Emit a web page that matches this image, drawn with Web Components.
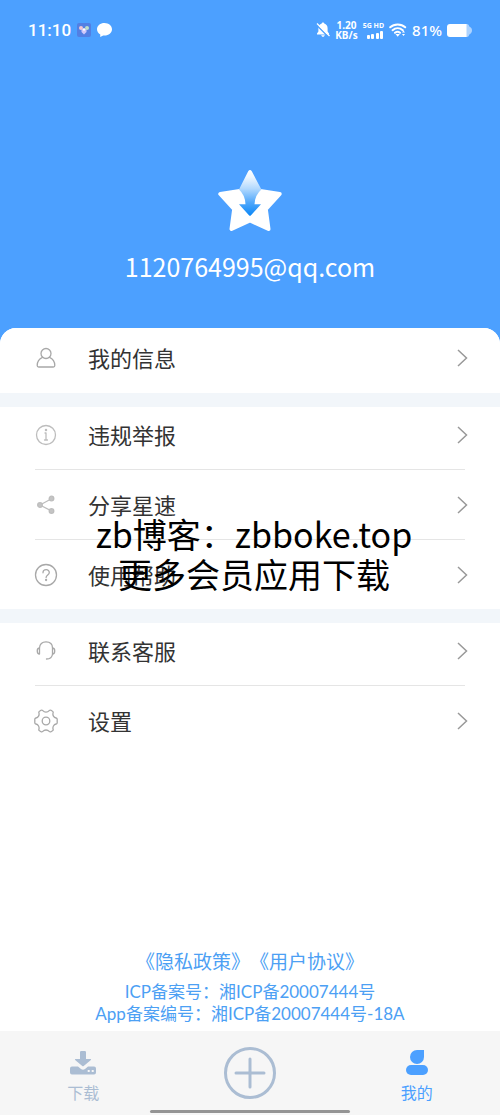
<!DOCTYPE html>
<html lang="zh-CN">
<head>
<meta charset="utf-8">
<meta name="viewport" content="width=device-width, initial-scale=1">
<title>我的</title>
<style>
  body { margin: 0; background: #fff; font-family: "Noto Sans CJK SC", sans-serif; }
</style>
</head>
<body>
<profile-page></profile-page>
<script>
const define = (name, html) => {
  const template = document.createElement('template');
  template.innerHTML = html;
  customElements.define(name, class extends HTMLElement {
    constructor() {
      super();
      this.attachShadow({ mode: 'open' }).append(template.content.cloneNode(true));
    }
  });
};

define('status-bar', `
<style>
  :host { display: flex; align-items: center; justify-content: space-between; height: 60px; padding: 0 28px; color: #fff; font-weight: 500; }
  div { display: flex; align-items: center; }
  .left { gap: 6px; }
  .right { gap: 5px; }
  svg { display: block; }
  time { font: 500 17px/24px Roboto, sans-serif; }
  .speed { display: grid; font: 700 10px/10px "Noto Sans", sans-serif; text-align: center; }
  .cell { display: grid; gap: 1px; justify-items: end; font: 700 7px/8px "Noto Sans", sans-serif; }
  .percent { font: 500 15px/24px "Noto Sans", sans-serif; }
</style>
<div class="left">
  <time>11:10</time>
  <svg width="14" height="14" viewBox="0 0 14 14"><rect width="14" height="14" rx="2" fill="#527fe3"/><circle cx="4" cy="5" r="2" fill="#f3c6d3"/><circle cx="10" cy="5" r="2" fill="#bfe0c8"/><path d="M4.500 6.500L7 5.500l2.500 1v2.500L7 11.500 4.500 9z" fill="#cfc8fa"/><circle cx="7" cy="6.500" r="1.200" fill="#fff"/></svg>
  <svg width="15" height="14" viewBox="0 0 15 14"><path fill="#fff" d="M7.500 0C3.300 0 0 2.700 0 6.200c0 2.200 1.300 4.100 3.300 5.300L3.200 14l3-1.500c.4.1.9.100 1.300.100 4.200 0 7.500-2.800 7.500-6.300S11.700 0 7.500 0z"/></svg>
</div>
<div class="right">
  <svg width="14" height="16" viewBox="0 0 14 16"><path fill="#fff" d="M7 .5c.7 0 1.200.5 1.300 1.100 2 .6 3.300 2.300 3.300 4.600v3.300l1.400 2v1H1v-1l1.400-2V6.200c0-2.300 1.300-4 3.300-4.600C5.800 1 6.300.5 7 .5zM5.200 13.300h3.600c-.2.900-.9 1.500-1.800 1.500s-1.600-.6-1.800-1.500z"/><path d="M.3 2.700l12 12" stroke="#4ca0ff" stroke-width="1.500"/><path d="M1 1.500l12.500 12.500" stroke="#fff" stroke-width="1.200"/></svg>
  <span class="speed"><span>1.20</span><span>KB/s</span></span>
  <span class="cell"><span>5G HD</span><svg width="17" height="8" viewBox="0 0 17 8" fill="#fff"><rect y="4" width="3" height="4" rx="1"/><rect x="4" y="3" width="3" height="5" rx="1"/><rect x="9" y="2" width="3" height="6" rx="1"/><rect x="13" width="3" height="8" rx="1"/></svg></span>
  <svg width="18" height="14" viewBox="0 0 18 14"><g fill="none" stroke="#fff" stroke-width="2" stroke-linecap="round"><path d="M1.200 4.300c4-3.700 11-3.700 15 0M3.600 7.200c3-2.600 7.200-2.600 10.200 0M6 9.800c1.600-1.200 3.500-1.200 5 0"/></g><path fill="#fff" d="M6.500 11h4.400l-2.200 2.700zM13 9.600l1.500-2 1.500 2zM13 11h3l-1.500 2z"/></svg>
  <span class="percent">81%</span>
  <svg width="25" height="13" viewBox="0 0 25 13"><path fill="#add3ff" d="M3 0h16a3 3 0 0 1 3.300 2.600C24 3.500 25 4.500 25 6.500s-1 3-2.700 3.900A3 3 0 0 1 19 13H3z"/><path fill="#fff" d="M3 0h16.500v13H3a3 3 0 0 1-3-3V3a3 3 0 0 1 3-3z"/></svg>
</div>`);

define('profile-header', `
<style>
  :host { display: flex; flex-direction: column; align-items: center; height: 348px; background: #4ca0ff; color: #fff; }
  status-bar { align-self: stretch; }
  svg { margin-top: 109px; }
  p { margin: 15px 0 0; font-size: 25px; line-height: 36px; }
</style>
<status-bar></status-bar>
<svg width="66" height="64" viewBox="0 0 66 64" role="img" aria-label="星速">
  <defs><linearGradient id="g" x1="0" y1="0" x2="0" y2="1"><stop offset="0" stop-color="#fff"/><stop offset=".15" stop-color="#eef7ff"/><stop offset=".4" stop-color="#b4dafe"/><stop offset=".7" stop-color="#52a9fb"/><stop offset="1" stop-color="#0b87f7"/></linearGradient></defs>
  <path fill="#fff" stroke="#fff" stroke-width="4" stroke-linejoin="round" d="M33 24L43.300 22.100L62.700 25L48.800 40.100L51.500 60L33 51.500L14.500 60L17.200 40.100L3.300 25L22.700 22.100z"/>
  <path fill="url(#g)" d="M22 20.600L31.200 2.200Q33 0 34.800 2.200L44.400 20.600Q38 26 37.500 35.200H44L33.800 46.500Q33 47 32.200 46.500L22 35.200H28.500Q28 26 22 20.600z"/>
</svg>
<p>1120764995@qq.com</p>`);

define('menu-group', `
<style>
  :host { display: block; background: #fff; }
  :host(:not(:last-of-type)) { border-bottom: 14px solid #f2f6fa; }
</style>
<slot></slot>`);

define('menu-item', `
<style>
  :host { display: block; padding: 7px 35px 6px; }
  :host(:first-of-type) { padding-top: 0; }
  :host(:not(:last-of-type)) { padding-bottom: 0; }
  :host([lead]) { padding-top: 2px; padding-bottom: 7px; }
  button { all: unset; box-sizing: border-box; display: flex; align-items: center; width: 100%; height: 56px; color: #333; font-size: 22px; line-height: 32px; cursor: pointer; }
  .icon { display: grid; place-items: center; width: 22px; margin-right: 31px; }
  .icon ::slotted(svg) { margin-left: -1px; }
  .label { flex: 1; padding-bottom: 3px; }
  .arrow { margin-right: -3px; }
  hr { margin: 6px 0 0; border: 0; border-top: 1px solid #e5e5e5; }
  :host(:last-of-type) hr { display: none; }
</style>
<button type="button"><span class="icon"><slot name="icon"></slot></span><span class="label"><slot></slot></span>
<svg class="arrow" width="12" height="20" viewBox="0 0 12 20"><path d="M2 2l8.500 8L2 18" fill="none" stroke="#999" stroke-width="1.500"/></svg></button>
<hr>`);

define('watermark-text', `
<style>
  :host { display: block; position: absolute; top: 514px; left: 8px; right: 0; color: #000; font-size: 34px; line-height: 40px; text-align: center; pointer-events: none; }
  p { margin: 0; }
</style>
<p>zb博客：zbboke.top</p><p>更多会员应用下载</p>`);

define('legal-info', `
<style>
  :host { display: block; margin-top: auto; padding-bottom: 6px; color: #4ca0f4; text-align: center; font-family: Lato, "Noto Sans CJK SC", sans-serif; font-size: 17px; line-height: 22px; }
  p { margin: 0; }
  a { color: inherit; text-decoration: none; }
  .links { font-size: 19px; line-height: 28px; margin-bottom: 5px; text-spacing-trim: space-all; font-kerning: none; }
</style>
<p class="links"><a href="#privacy">《隐私政策》</a><a href="#terms">《用户协议》</a></p>
<p>ICP备案号：湘ICP备20007444号</p>
<p>App备案编号：湘ICP备20007444号-18A</p>`);

define('tab-bar', `
<style>
  :host { display: block; position: relative; background: #f6f6f6; }
  nav { display: grid; grid-template-columns: repeat(3, 1fr); height: 84px; }
  button { all: unset; display: flex; flex-direction: column; align-items: center; justify-content: center; gap: 4px; color: #abbdd3; font-size: 16px; line-height: 24px; cursor: pointer; }
  button:not([aria-label]) { padding-top: 7px; }
  .active { color: #4ca0ff; }
  i { position: absolute; left: 30%; right: 30%; bottom: 2px; height: 3px; border-radius: 2px; background: #949494; }
</style>
<nav>
  <button type="button"><svg width="28" height="26" viewBox="0 0 28 26" fill="currentColor"><path d="M11 2.200Q11 1 12.200 1h3.600Q17 1 17 2.200V9h4.500q1 0 .4 1L14.700 16q-.7.6-1.400 0L6.100 10q-.6-1 .4-1H11z"/><path fill-rule="evenodd" d="M3 16.500h6l3 2.600q2 1.400 4 0l3-2.600h6a2 2 0 0 1 2 2V22.500a2 2 0 0 1-2 2H3a2 2 0 0 1-2-2v-4a2 2 0 0 1 2-2zM18.700 20v2h2v-2zM22.700 20v2h2v-2z"/></svg><span>下载</span></button>
  <button type="button" aria-label="添加"><svg width="54" height="54" viewBox="0 0 54 54" fill="none" stroke="currentColor" stroke-width="3" stroke-linecap="round"><circle cx="27" cy="27" r="24.500"/><path d="M13 27h28M27 13v28"/></svg></button>
  <button type="button" class="active" aria-current="page"><svg width="28" height="26" viewBox="0 0 28 26" fill="currentColor"><path d="M14 0h7v7a7 7 0 1 1-7-7z"/><rect x="3" y="15" width="22" height="10" rx="5"/></svg><span>我的</span></button>
</nav>
<i></i>`);

define('profile-page', `
<style>
  :host { display: flex; flex-direction: column; min-height: 100vh; position: relative; background: #fff; }
  main { position: relative; margin-top: -20px; border-radius: 16px 16px 0 0; overflow: hidden; background: #fff; }
  svg { display: block; fill: none; stroke: #a8a8a8; stroke-width: 1.3; stroke-linecap: round; stroke-linejoin: round; }
  .pale { stroke: #bdbdbd; }
  legal-info { padding-top: 40px; }
</style>
<profile-header></profile-header>
<main>
  <menu-group>
    <menu-item lead><svg slot="icon" width="24" height="24" viewBox="0 0 24 24"><circle cx="12" cy="7.500" r="5"/><path d="M8.500 11.300C5 12.800 3.200 16 3.200 19.500q0 1.500 1.500 1.500h14.600q1.500 0 1.500-1.500c0-3.500-1.800-6.700-5.300-8.200"/></svg>我的信息</menu-item>
  </menu-group>
  <menu-group>
    <menu-item><svg slot="icon" class="pale" width="24" height="24" viewBox="0 0 24 24"><circle cx="12" cy="12" r="9.500"/><path d="M11 10h1v7M10.500 17h3"/><circle cx="12" cy="7" r=".6"/></svg>违规举报</menu-item>
    <menu-item><svg slot="icon" class="pale" width="24" height="24" viewBox="0 0 24 24"><path d="M17.500 5.700L6 12l11.500 6"/><g fill="#c4c4c4"><circle cx="17.500" cy="5.500" r="2.300"/><circle cx="6" cy="12" r="2.300"/><circle cx="17.500" cy="18" r="2.300"/></g></svg>分享星速</menu-item>
    <menu-item><svg slot="icon" width="24" height="24" viewBox="0 0 24 24"><circle cx="12" cy="12" r="10.500"/><path d="M9 9.800c0-4.200 6.500-4 6.300-.2 0 2.400-3.200 2.500-3.200 5"/><circle cx="12.100" cy="17" r=".5"/></svg>使用帮助</menu-item>
  </menu-group>
  <menu-group>
    <menu-item><svg slot="icon" width="24" height="24" viewBox="0 0 24 24"><path d="M5.500 9C5.500 5 8.200 2.800 12 2.800S18.500 5 18.500 9M5.500 9C2.500 9 2.500 15 5.500 15zM18.500 9c3 0 3 6 0 6zM18.500 15c-.3 3-2.500 5-6 5"/></svg>联系客服</menu-item>
    <menu-item><svg slot="icon" width="24" height="24" viewBox="0 0 24 24"><circle cx="12" cy="12" r="3.800"/><path d="M7 1.300q1-.6 1.800.3c1.700 1.900 4.700 1.900 6.400 0q.8-.9 1.800-.3l1.500.9q.9.500.6 1.600c-.7 2.400.6 4.700 3 5.200q1.100.3 1.100 1.300v3.400q0 1-1.100 1.300c-2.400.6-3.700 2.900-3 5.300q.3 1-.6 1.500l-1.500.9q-1 .6-1.800-.3c-1.700-1.900-4.700-1.900-6.400 0q-.8.900-1.800.3l-1.500-.9q-.9-.5-.6-1.500c.7-2.400-.6-4.700-3-5.300Q.800 14.700.800 13.700v-3.400q0-1 1.100-1.300c2.400-.5 3.700-2.800 3-5.200q-.3-1.100.6-1.600z"/></svg>设置</menu-item>
  </menu-group>
</main>
<legal-info></legal-info>
<tab-bar></tab-bar>
<watermark-text></watermark-text>`);
</script>
</body>
</html>
